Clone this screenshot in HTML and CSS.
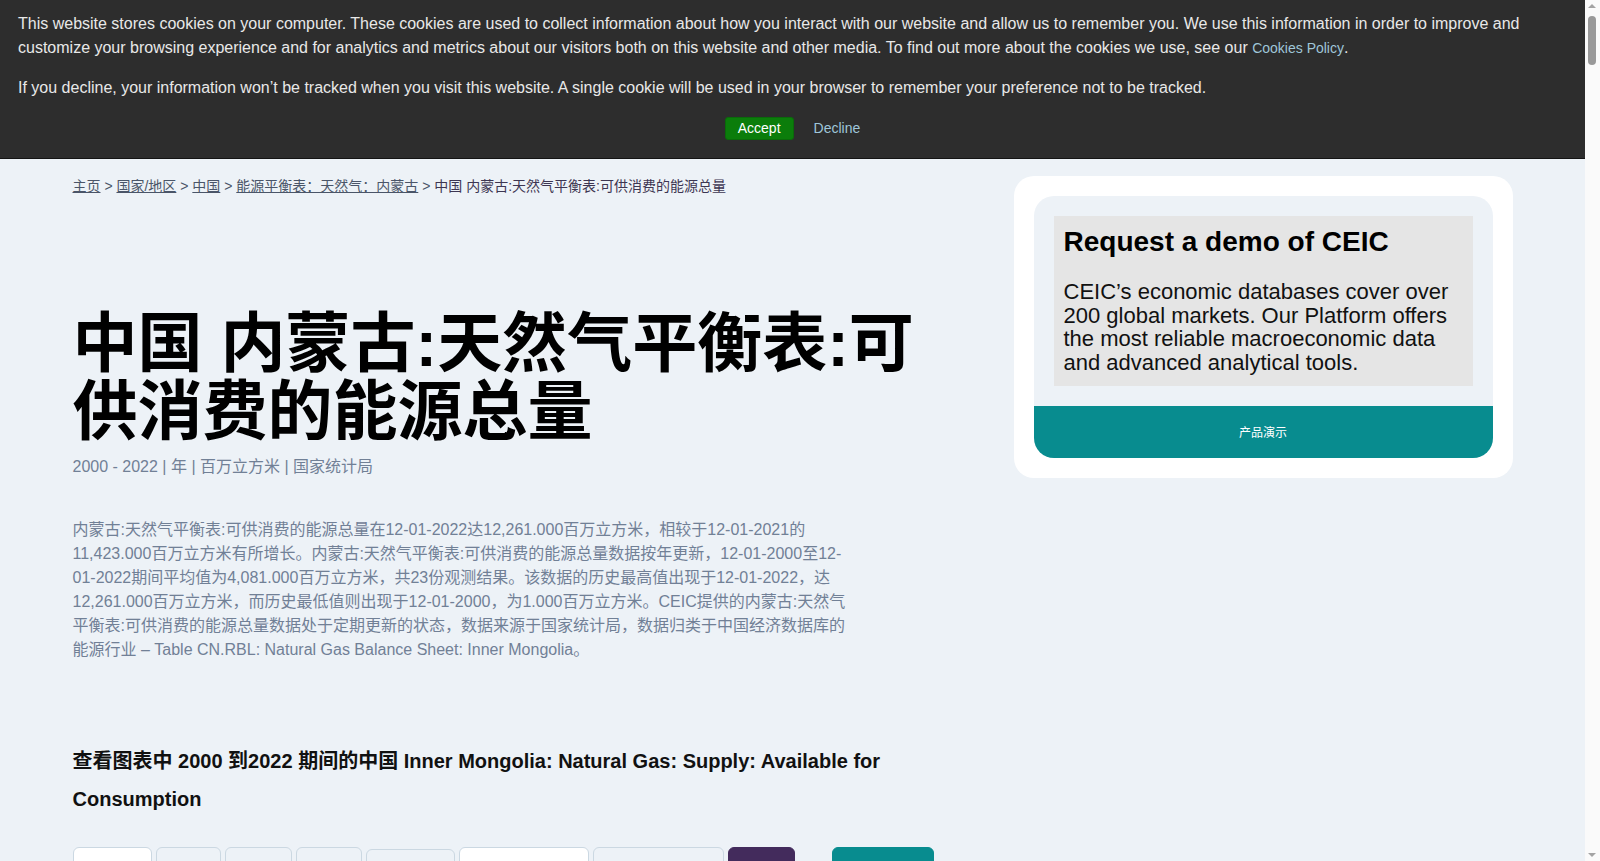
FILE: index.html
```html
<!DOCTYPE html>
<html lang="zh">
<head>
    <meta charset="UTF-8">
    <meta name="viewport" content="width=device-width, initial-scale=1.0">
    <title>中国 内蒙古:天然气平衡表:可供消费的能源总量</title>
    <link rel="stylesheet" href="styles.css">
</head>
<body>
    <!-- Cookie consent -->
    <div class="cookie-banner">
        <p>This website stores cookies on your computer. These cookies are used to collect information about how you interact with our website and allow us to remember you. We use this information in order to improve and customize your browsing experience and for analytics and metrics about our visitors both on this website and other media. To find out more about the cookies we use, see our <a href="#" class="cookie-link">Cookies Policy</a>.</p>
        <p>If you decline, your information won’t be tracked when you visit this website. A single cookie will be used in your browser to remember your preference not to be tracked.</p>
        <div class="cookie-actions">
            <button class="btn-accept">Accept</button>
            <button class="btn-decline">Decline</button>
        </div>
    </div>

    <div class="page">
        <main class="main-col">
            <nav class="breadcrumb">
                <a href="#">主页</a> &gt; <a href="#">国家/地区</a> &gt; <a href="#">中国</a> &gt; <a href="#">能源平衡表：天然气：内蒙古</a> &gt; <span class="current">中国 内蒙古:天然气平衡表:可供消费的能源总量</span>
            </nav>

            <h1 class="title">中国 内蒙古:天然气平衡表:可供消费的能源总量</h1>
            <div class="meta">2000 - 2022 | 年 | 百万立方米 | 国家统计局</div>

            <p class="description">内蒙古:天然气平衡表:可供消费的能源总量在12-01-2022达12,261.000百万立方米，相较于12-01-2021的11,423.000百万立方米有所增长。内蒙古:天然气平衡表:可供消费的能源总量数据按年更新，12-01-2000至12-01-2022期间平均值为4,081.000百万立方米，共23份观测结果。该数据的历史最高值出现于12-01-2022，达12,261.000百万立方米，而历史最低值则出现于12-01-2000，为1.000百万立方米。CEIC提供的内蒙古:天然气平衡表:可供消费的能源总量数据处于定期更新的状态，数据来源于国家统计局，数据归类于中国经济数据库的能源行业 – Table CN.RBL: Natural Gas Balance Sheet: Inner Mongolia。</p>

            <h3 class="chart-heading">查看图表中 2000 到2022 期间的中国 Inner Mongolia: Natural Gas: Supply: Available for Consumption</h3>

            <div class="chart-toolbar">
                <button class="tool tool-white w79"></button>
                <button class="tool w65"></button>
                <button class="tool w67"></button>
                <button class="tool w66"></button>
                <button class="tool tool-low w89"><span class="tool-mark"></span></button>
                <button class="tool tool-white w130"></button>
                <button class="tool w131"></button>
                <button class="tool tool-purple w67"></button>
                <button class="tool tool-teal w102"></button>
            </div>
            <div class="chart"></div>
        </main>

        <aside class="side-col">
            <div class="demo-card">
                <div class="demo-inner">
                    <div class="demo-body">
                        <h2>Request a demo of CEIC</h2>
                        <p>CEIC’s economic databases cover over 200 global markets. Our Platform offers the most reliable macroeconomic data and advanced analytical tools.</p>
                    </div>
                    <a href="#" class="demo-btn">产品演示</a>
                </div>
            </div>
        </aside>
    </div>

    <!-- window scrollbar -->
    <div class="scrollbar">
        <span class="sb-arrow sb-up"></span>
        <span class="sb-thumb"></span>
        <span class="sb-arrow sb-down"></span>
    </div>
</body>
</html>
```

FILE: styles.css
```css
/* General */
body {
    margin: 0;
    padding-right: 15px;
    font-family: "Liberation Sans", "Noto Sans CJK SC", sans-serif;
    background: #edf2f7;
    color: #1a202c;
}

/* Scrollbar rail */
.scrollbar {
    position: fixed;
    top: 0;
    right: 0;
    width: 15px;
    height: 100vh;
    background: #fafafa;
}

.sb-thumb {
    position: absolute;
    top: 16px;
    left: 3px;
    width: 8px;
    height: 49px;
    border-radius: 4px;
    background: #999;
}

.sb-arrow {
    position: absolute;
    left: 3px;
    width: 0;
    height: 0;
    border-left: 4px solid transparent;
    border-right: 4px solid transparent;
}

.sb-up {
    top: 4px;
    border-bottom: 4px solid #a3a3a3;
}

.sb-down {
    bottom: 4px;
    border-top: 4px solid #a3a3a3;
}

/* Cookie banner */
.cookie-banner {
    background: #2d2d2d;
    color: #e8e8e8;
    padding: 12px 18px 16px;
    border-bottom: 1px solid #141414;
    font-size: 16px;
    line-height: 24px;
}

.cookie-banner p {
    margin: 0 0 16px;
}

.cookie-banner p + p {
    margin-bottom: 14px;
}

.cookie-link {
    color: #9fc6d9;
    font-size: 14px;
    text-decoration: none;
}

.cookie-actions {
    display: flex;
    justify-content: center;
    align-items: center;
    gap: 20px;
    height: 28px;
}

.btn-accept {
    background: #0b7d0b;
    color: #fff;
    border: 1px solid #0a6a0a;
    border-radius: 3px;
    font-family: inherit;
    font-size: 14px;
    height: 23px;
    padding: 0 12px;
    cursor: pointer;
}

.btn-decline {
    background: none;
    border: none;
    color: #9fc6d9;
    font-family: inherit;
    font-size: 14px;
    padding: 0;
    cursor: pointer;
}

/* Layout */
.page {
    max-width: 1440px;
    margin: 0 auto;
    padding-top: 17px;
    display: grid;
    grid-template-columns: 861px 1fr;
    column-gap: 80px;
    align-items: start;
    min-height: 14600px;
}

/* Breadcrumb */
.breadcrumb {
    font-size: 14px;
    line-height: 20px;
    color: #4a5568;
}

.breadcrumb a {
    color: #4a5568;
}

.breadcrumb .current {
    color: #3d3652;
}

/* Title block */
.title {
    margin: 114px 0 0;
    font-size: 65px;
    line-height: 68px;
    font-weight: 700;
    color: #000;
}

.meta {
    margin-top: 9px;
    font-size: 16px;
    line-height: 24px;
    color: #718096;
}

.description {
    margin: 39px 0 0;
    max-width: 778px;
    font-size: 16px;
    line-height: 24px;
    color: #718096;
}

.chart-heading {
    margin: 80px 0 0;
    font-size: 20px;
    line-height: 38px;
    font-weight: 700;
    color: #111;
}

/* Chart toolbar */
.chart-toolbar {
    margin-top: 29px;
    display: flex;
    align-items: flex-start;
    gap: 4px;
}

.tool {
    height: 40px;
    background: #edf2f7;
    border: 1px solid #cbd8e2;
    border-radius: 6px;
    padding: 0;
    position: relative;
}

.tool-white {
    background: #fff;
}

.tool-low {
    margin-top: 2px;
}

.tool-mark {
    position: absolute;
    left: 16px;
    bottom: 24px;
    width: 2px;
    height: 3px;
    background: #9cc9cf;
}

.tool-purple {
    background: #432b5c;
    border-color: #432b5c;
}

.tool-teal {
    margin-left: 33px;
    background: #088c8f;
    border-color: #088c8f;
}

.w65 { width: 65px; }
.w66 { width: 66px; }
.w67 { width: 67px; }
.w79 { width: 79px; }
.w89 { width: 89px; }
.w102 { width: 102px; }
.w130 { width: 130px; }
.w131 { width: 131px; }

.chart {
    margin-top: 20px;
    height: 480px;
    background: #fff;
}

/* Demo card */
.demo-card {
    background: #fff;
    border-radius: 20px;
    padding: 20px;
}

.demo-inner {
    background: #edf2f7;
    border-radius: 20px;
    overflow: hidden;
}

.demo-body {
    margin: 20px 20px 0;
    background: #e5e5e5;
    padding: 10px 10px 11px;
    color: #000;
}

.demo-body h2 {
    margin: 0 0 22px;
    font-size: 28px;
    line-height: 32px;
}

.demo-body p {
    margin: 0;
    font-size: 22px;
    line-height: 23.7px;
    color: #111;
}

.demo-btn {
    margin-top: 20px;
    height: 52px;
    display: flex;
    justify-content: center;
    align-items: center;
    background: #088c8f;
    color: #fff;
    font-size: 12px;
    text-decoration: none;
}
```
